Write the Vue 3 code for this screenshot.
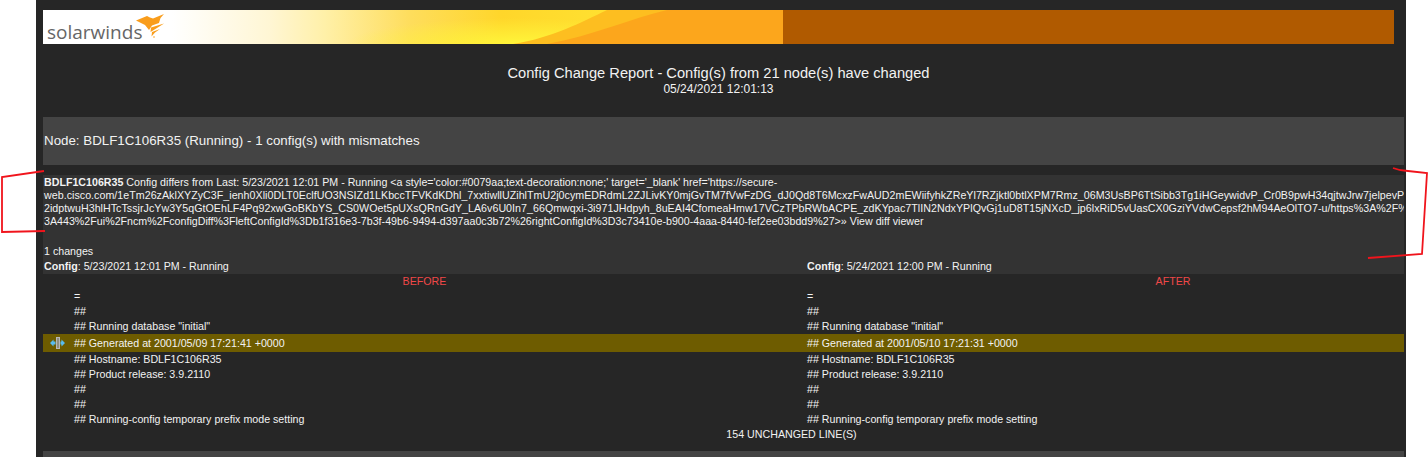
<script setup>
const rows = [
  { left: '=', right: '=' },
  { left: '##', right: '##' },
  { left: '## Running database "initial"', right: '## Running database "initial"' },
  { left: '## Generated at 2001/05/09 17:21:41 +0000', right: '## Generated at 2001/05/10 17:21:31 +0000', changed: true },
  { left: '## Hostname: BDLF1C106R35', right: '## Hostname: BDLF1C106R35' },
  { left: '## Product release: 3.9.2110', right: '## Product release: 3.9.2110' },
  { left: '##', right: '##' },
  { left: '##', right: '##' },
  { left: '## Running-config temporary prefix mode setting', right: '## Running-config temporary prefix mode setting' },
]
</script>

<template>
  <div class="page">
    <div class="panel">
      <div class="banner">
        <div class="logo">
          <span class="logo-text">solarwinds</span>
          <svg class="flame" viewBox="0 0 30 24" width="30" height="24">
            <path fill="#f99d1c" d="M0 6.500 L11 2 L14 3.500 L17 4.500 L28 0 L24.500 4 L23 9 L16 11.500 L13 16 L9 11 Z" />
            <path fill="#f99d1c" d="M15 13.500 L28 9.500 L21 14 L14.500 18 Z" />
            <path fill="#f99d1c" d="M16 18 L24 15 L19 18.500 L15.500 22.500 Z" />
            <circle fill="#f99d1c" cx="18" cy="23" r="0.800" />
          </svg>
        </div>
        <svg class="fade" viewBox="0 0 611 34" width="611" height="34">
          <defs>
            <linearGradient id="base" x1="0" y1="0" x2="611" y2="0" gradientUnits="userSpaceOnUse">
              <stop offset="0" stop-color="#ffffff" />
              <stop offset="0.16" stop-color="#fff6d4" />
              <stop offset="0.25" stop-color="#fff0a8" />
              <stop offset="0.39" stop-color="#fedd5c" />
              <stop offset="0.54" stop-color="#ffd62a" />
              <stop offset="0.7" stop-color="#ffe030" />
              <stop offset="1" stop-color="#ffe030" />
            </linearGradient>
            <radialGradient id="glow" cx="345" cy="34" r="1" gradientUnits="userSpaceOnUse" gradientTransform="translate(345 34) scale(170 26) translate(-345 -34)">
              <stop offset="0" stop-color="#fff53a" />
              <stop offset="1" stop-color="#fff53a" stop-opacity="0" />
            </radialGradient>
          </defs>
          <rect width="611" height="34" fill="url(#base)" />
          <rect width="611" height="34" fill="url(#glow)" />
          <path fill="#fdbe20" d="M341 34 C380 28 410 12 435 0 L611 0 L611 34 Z" />
          <path fill="#fca61c" d="M375 34 C420 26 460 8 495 0 L611 0 L611 34 Z" />
        </svg>
        <div class="solid"></div>
      </div>

      <div class="title">Config Change Report - Config(s) from 21 node(s) have changed</div>
      <div class="date">05/24/2021 12:01:13</div>

      <div class="node-bar">Node: BDLF1C106R35 (Running) - 1 config(s) with mismatches</div>

      <div class="details">
        <div class="line"><b>BDLF1C106R35</b> Config differs from Last: 5/23/2021 12:01 PM - Running &lt;a style='color:#0079aa;text-decoration:none;' target='_blank' href='https://secure-</div>
        <div class="line long">web.cisco.com/1eTm26zAklXYZyC3F_ienh0Xli0DLT0EclfUO3NSIZd1LKbccTFVKdKDhl_7xxtiwllUZihlTmU2j0cymEDRdmL2ZJLivKY0mjGvTM7fVwFzDG_dJ0Qd8T6McxzFwAUD2mEWiifyhkZReYl7RZjktl0btlXPM7Rmz_06M3UsBP6TtSibb3Tg1iHGeywidvP_Cr0B9pwH34qjtwJrw7jelpevP</div>
        <div class="line long">2idptwuH3hlHTcTssjrJcYw3Y5qGtOEhLF4Pq92xwGoBKbYS_CS0WOet5pUXsQRnGdY_LA6v6U0In7_66Qmwqxi-3i971JHdpyh_8uEAI4CfomeaHmw17VCzTPbRWbACPE_zdKYpac7TlIN2NdxYPlQvGj1uD8T15jNXcD_jp6lxRiD5vUasCX0GziYVdwCepsf2hM94AeOlTO7-u/https%3A%2F%</div>
        <div class="line mid">3A443%2Fui%2Fncm%2FconfigDiff%3FleftConfigId%3Db1f316e3-7b3f-49b6-9494-d397aa0c3b72%26rightConfigId%3D3c73410e-b900-4aaa-8440-fef2ee03bdd9%27&gt;» View diff viewer</div>
        <div class="changes">1 changes</div>
        <div class="configs">
          <div><b>Config</b>: 5/23/2021 12:01 PM - Running</div>
          <div><b>Config</b>: 5/24/2021 12:00 PM - Running</div>
        </div>
      </div>

      <div class="diff-clip">
        <div class="diff">
          <div class="cols heads">
            <div>BEFORE</div>
            <div>AFTER</div>
          </div>
          <div v-for="(row, i) in rows" :key="i" class="cols row" :class="{ changed: row.changed }">
            <div class="cell">
              <svg v-if="row.changed" class="arrows" viewBox="0 0 15 12" width="15" height="12">
                <path fill="#58bdf0" d="M0 6 L3.500 2.500 L3.500 4.500 L5.500 4.500 L5.500 7.500 L3.500 7.500 L3.500 9.500 Z" />
                <rect x="6.500" y=".5" width="3" height="11" fill="#8f8f80" stroke="#b8b8b8" />
                <path fill="#58bdf0" d="M15 6 L11.500 2.500 L11.500 4.500 L10.500 4.500 L10.500 7.500 L11.500 7.500 L11.500 9.500 Z" />
              </svg>
              {{ row.left }}
            </div>
            <div class="cell right">{{ row.right }}</div>
          </div>
          <div class="unchanged">154 UNCHANGED LINE(S)</div>
        </div>
      </div>
      <div class="next-bar"></div>
    </div>

    <svg class="marks" viewBox="0 0 1428 457" width="1428" height="457">
      <path d="M44 171 L2 177 L2 232 L45 231" />
      <path d="M1393 168 C1398 170 1402 171 1408 171 L1427 173 L1422 254 L1368 258" />
    </svg>
  </div>
</template>

<style scoped>
.page {
  position: relative;
  width: 1428px;
  height: 457px;
  overflow: hidden;
  background: #fff;
  font-family: "Liberation Sans", Arial, sans-serif;
  font-size: 10.67px;
  color: #f2f2f2;
}
.panel {
  margin-left: 36px;
  width: 1370px;
  height: 457px;
  box-sizing: border-box;
  padding: 10px 2px 0 7px;
  background: #262626;
  overflow: hidden;
}
.banner {
  display: flex;
  width: 1351px;
  height: 34px;
}
.logo {
  position: relative;
  width: 129px;
  background: #fff;
  display: flex;
  align-items: flex-end;
}
.logo-text {
  margin-left: 4px;
  margin-bottom: -1px;
  font-family: "Open Sans", sans-serif;
  font-size: 19px;
  line-height: 26px;
  color: #666;
}
.flame {
  position: absolute;
  left: 93px;
  top: 4px;
}
.fade {
  display: block;
  flex: none;
}
.solid {
  flex: 1;
  background: #b05a00;
}
.title {
  width: 1351px;
  margin-top: 20px;
  text-align: center;
  font-size: 14.67px;
  line-height: 18px;
}
.date {
  width: 1351px;
  text-align: center;
  font-size: 12px;
  line-height: 14px;
}
.node-bar {
  margin-top: 21px;
  height: 48px;
  padding-left: 1px;
  background: #444;
  font-size: 13.33px;
  line-height: 48px;
}
.details {
  margin-top: 10px;
  height: 99px;
  box-sizing: border-box;
  padding-top: 1px;
  background: #333;
  line-height: 13px;
}
.line {
  padding-left: 1px;
  white-space: nowrap;
  overflow: hidden;
}
.long {
  letter-spacing: 0.034px;
}
.mid {
  letter-spacing: 0.012px;
}
.changes {
  margin-top: 16px;
  padding-left: 1px;
  line-height: 15px;
}
.configs {
  display: grid;
  grid-template-columns: 763px 1fr;
  line-height: 15px;
  padding-left: 1px;
}
.diff-clip {
  overflow: hidden;
}
.diff {
  width: 1497px;
}
.cols {
  display: grid;
  grid-template-columns: 763px 734px;
}
.heads {
  text-align: center;
  color: #f04848;
  line-height: 15px;
}
.row {
  line-height: 15px;
}
.cell {
  position: relative;
  padding-left: 31px;
}
.cell.right {
  padding-left: 1px;
}
.changed {
  background: #6e5c00;
  line-height: 18px;
}
.arrows {
  position: absolute;
  left: 7px;
  top: 3px;
}
.unchanged {
  text-align: center;
  line-height: 15px;
}
.next-bar {
  margin-top: 9px;
  height: 10px;
  background: #444;
}
.marks {
  position: absolute;
  left: 0;
  top: 0;
  pointer-events: none;
}
.marks path {
  fill: none;
  stroke: #f0141c;
  stroke-width: 1.8;
}
</style>
